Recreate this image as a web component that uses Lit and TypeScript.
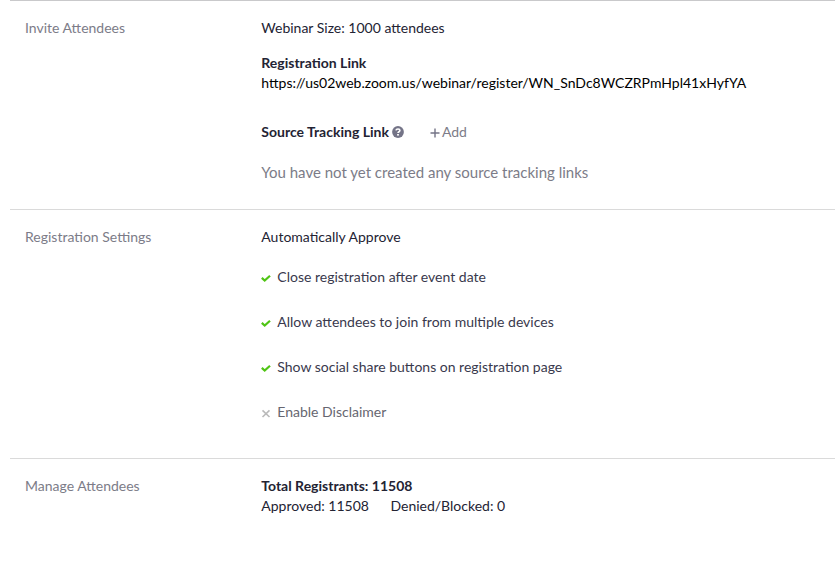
import { LitElement, html, css, svg } from "lit";
import { customElement, property } from "lit/decorators.js";

@customElement("option-row")
class OptionRow extends LitElement {
  @property({ type: Boolean }) on = false;
  @property() label = "";
  static styles = css`
    :host { display: flex; align-items: center; height: 20px; margin-bottom: 25px; }
    :host(:last-of-type) { margin-bottom: 0; }
    svg { width: 10px; height: 10px; margin: 2px 6px 0 0; flex: none; }
    .on { color: #39394d; }
    .off { color: #666670; }
  `;
  render() {
    return html`<svg viewBox="0 0 10 10" fill="none">${this.on
      ? svg`<path d="M.8 4.9 3.7 7.6 9 2.7" stroke="#4fc414" stroke-width="2.2"/>`
      : svg`<path d="M1.5 2.3 8.5 9 M8.5 2.3 1.5 9" stroke="#bababa" stroke-width="1.6"/>`}</svg>
      <span class=${this.on ? "on" : "off"}>${this.label}</span>`;
  }
}

@customElement("app-root")
class AppRoot extends LitElement {
  static styles = css`
    :host { display: block; box-sizing: border-box; height: 563px; overflow: hidden; padding-left: 10px; background: #fff;
      color: #232333; font: 14px/20px Lato, sans-serif; }
    section { display: grid; grid-template-columns: 236.3px 1fr; box-sizing: border-box; border-top: 1px solid #dadada; padding: 17px 0 0 15px; white-space: nowrap; }
    .invite { height: 209px; border-top-color: #c9c9cb; }
    .settings { height: 249px; }
    .manage { height: 105px; }
    .name { color: #7c7c88; }
    .bold { font-weight: 700; }
    .gap { margin-top: 15px; }
    .url { color: #000; }
    .source { display: flex; align-items: center; margin-top: 29px; height: 20px; }
    .help { width: 12px; height: 12px; margin-left: 3.5px; }
    .add { display: flex; align-items: center; margin-left: 25.5px; color: #7c7c88; }
    .add svg { width: 10px; height: 10px; margin: 1px 2px 0 0; }
    .empty { margin-top: 20px; font-size: 15px; color: #7c7c88; }
    .options { margin-top: 20px; }
    .counts { display: flex; gap: 21.5px; }
  `;
  render() {
    return html`
      <section class="invite">
        <div class="name">Invite Attendees</div>
        <div>
          <div>Webinar Size: 1000 attendees</div>
          <div class="bold gap">Registration Link</div>
          <div class="url">https://us02web.zoom.us/webinar/register/WN_SnDc8WCZRPmHpl41xHyfYA</div>
          <div class="source"><span class="bold">Source Tracking Link</span>
            <svg class="help" viewBox="0 0 12 12"><circle cx="6" cy="6" r="5.9" fill="#747487"/><path d="M3.9 4.4C4.4 2.4 7.9 2.5 7.9 4.5 7.9 5.8 6 5.7 6 7.1" fill="none" stroke="#fff" stroke-width="1.6"/><rect x="5.1" y="8" width="1.8" height="1.6" fill="#fff"/></svg>
            <span class="add"><svg viewBox="0 0 10 10"><path d="M5 .5v9M.5 5h9" stroke="#747487" stroke-width="1.4"/></svg>Add</span>
          </div>
          <div class="empty">You have not yet created any source tracking links</div>
        </div>
      </section>
      <section class="settings">
        <div class="name">Registration Settings</div>
        <div>
          <div>Automatically Approve</div>
          <div class="options">
            <option-row on label="Close registration after event date"></option-row>
            <option-row on label="Allow attendees to join from multiple devices"></option-row>
            <option-row on label="Show social share buttons on registration page"></option-row>
            <option-row label="Enable Disclaimer"></option-row>
          </div>
        </div>
      </section>
      <section class="manage">
        <div class="name">Manage Attendees</div>
        <div>
          <div class="bold">Total Registrants: 11508</div>
          <div class="counts"><span>Approved: 11508</span><span>Denied/Blocked: 0</span></div>
        </div>
      </section>`;
  }
}
